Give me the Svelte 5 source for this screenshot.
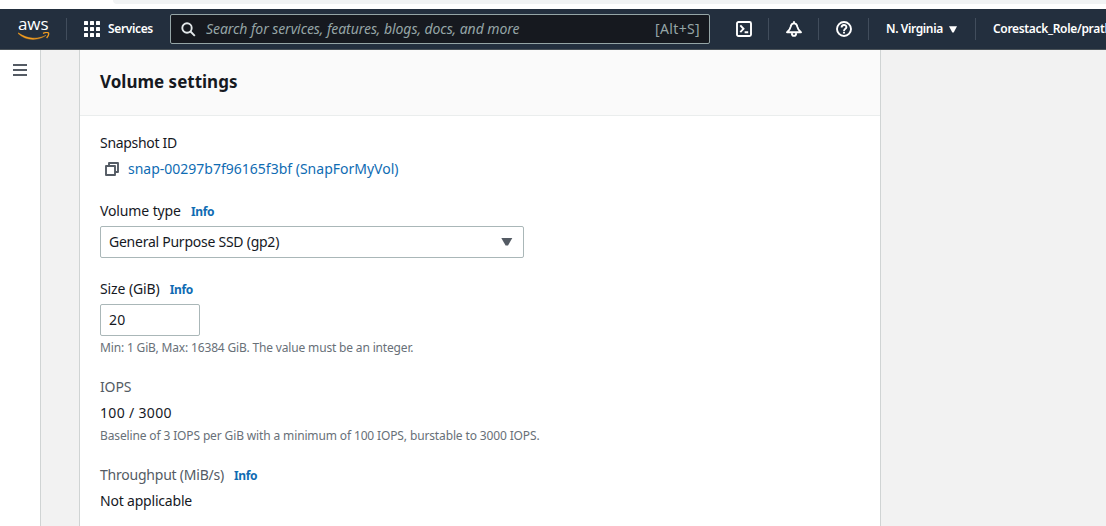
<script>
  let size = $state('20');
</script>

<div class="page">
  <div class="browser-strip"><div class="omnibox"></div></div>

  <header class="topbar">
    <a class="logo" aria-label="aws">
      <span class="logo-word">aws</span>
      <svg class="smile" width="32" height="10" viewBox="0 0 32 10">
        <path d="M0.3 0.8C9 7.2 20 7.6 28 3.3C20 9.2 7.5 8.8 0.1 1.5Z" fill="#f29c1f" stroke="#f29c1f" stroke-width="0.4" />
        <path d="M25 1.4C27.2 0.5 29.8 0.4 30.5 1C31 2.2 29.9 4.6 28.6 6" fill="none" stroke="#f29c1f" stroke-width="1.3" />
      </svg>
    </a>
    <i class="rule"></i>
    <div class="services">
      <svg width="16" height="16" viewBox="0 0 16 16" fill="#fff">
        {#each [0, 6, 12] as y}
          {#each [0, 6, 12] as x}
            <rect {x} {y} width="4" height="4" rx="0.5" />
          {/each}
        {/each}
      </svg>
      <span class="services-text">Services</span>
    </div>
    <div class="search">
      <svg width="15" height="15" viewBox="0 0 15 15" fill="none" stroke="#e3e8ea" stroke-width="1.9">
        <circle cx="6" cy="6" r="4.7" />
        <path d="M9.5 9.5L13.8 13.8" />
      </svg>
      <span class="placeholder">Search for services, features, blogs, docs, and more</span>
      <span class="shortcut">[Alt+S]</span>
    </div>
    <div class="tool shell">
      <svg width="16" height="16" viewBox="0 0 16 16" fill="none" stroke="#fff" stroke-width="1.9">
        <rect x="1" y="1" width="14" height="14" rx="1.5" />
        <path d="M4.3 4.4L7.5 7.8L4.3 11.2M8.6 11.2H12.2" />
      </svg>
    </div>
    <i class="rule"></i>
    <div class="tool">
      <svg width="16" height="16" viewBox="0 0 16 16" fill="none" stroke="#fff" stroke-width="1.9" stroke-linejoin="round">
        <path d="M8 0.3V2.4M1 11.2H15C12.6 9.7 11.9 8.3 11.4 5.9C11 3.6 9.8 2.4 8 2.4S5 3.6 4.6 5.9C4.1 8.3 3.4 9.7 1 11.2Z" />
        <path d="M5.8 12.1C5.9 15.8 10.1 15.8 10.2 12.1" />
      </svg>
    </div>
    <i class="rule"></i>
    <div class="tool">
      <svg width="16" height="16" viewBox="0 0 16 16" fill="none" stroke="#fff" stroke-width="1.9">
        <circle cx="8" cy="8" r="7" />
        <path d="M5.6 6.5C5.6 3.3 10.4 3.3 10.4 6.2C10.4 7.9 8 7.7 8 10" />
        <path d="M8 10.8V12.6" />
      </svg>
    </div>
    <i class="rule"></i>
    <div class="region">
      <span class="region-text">N. Virginia</span>
      <svg width="8" height="7" viewBox="0 0 8 7"><path d="M0 0.3H8L4.7 6.5H3.3Z" fill="#fff" /></svg>
    </div>
    <i class="rule"></i>
    <div class="account">Corestack_Role/prath</div>
  </header>

  <div class="body">
    <nav class="side">
      <svg width="14" height="12" viewBox="0 0 14 12" fill="#545b64">
        <rect width="14" height="2" /><rect y="5" width="14" height="2" /><rect y="10" width="14" height="2" />
      </svg>
    </nav>
    <main class="card">
      <div class="card-head"><h2>Volume settings</h2></div>
      <div class="form">
        <section>
          <div class="label"><span class="t-snap">Snapshot ID</span></div>
          <div class="row snapshot">
            <svg width="14" height="14" viewBox="0 0 14 14" fill="none" stroke="#545b64" stroke-width="1.9">
              <path d="M1 4H10V13H1ZM4 4V1H13V10H10" stroke-linejoin="round" />
            </svg>
            <a class="t-link">snap-00297b7f96165f3bf (SnapForMyVol)</a>
          </div>
        </section>
        <section>
          <div class="label"><span class="t-type">Volume type</span><a class="info">Info</a></div>
          <div class="field select">
            <span class="t-gp">General Purpose SSD (gp2)</span>
            <svg width="12" height="8" viewBox="0 0 12 8"><path d="M0.3 0H11.3L7 7.6H4.6Z" fill="#545b64" /></svg>
          </div>
        </section>
        <section>
          <div class="label"><span class="t-size">Size (GiB)</span><a class="info">Info</a></div>
          <input class="field number" bind:value={size} />
          <div class="hint t-min">Min: 1 GiB, Max: 16384 GiB. The value must be an integer.</div>
        </section>
        <section>
          <div class="label muted"><span class="t-iops">IOPS</span></div>
          <div class="row"><span class="t-val">100 / 3000</span></div>
          <div class="hint t-base">Baseline of 3 IOPS per GiB with a minimum of 100 IOPS, burstable to 3000 IOPS.</div>
        </section>
        <section>
          <div class="label muted"><span class="t-thr">Throughput (MiB/s)</span><a class="info">Info</a></div>
          <div class="row"><span class="t-na">Not applicable</span></div>
        </section>
      </div>
    </main>
  </div>
</div>

<style>
  :global(body) { margin: 0; overflow: hidden; }
  .page {
    width: 1106px; height: 526px; overflow: hidden; display: flex; flex-direction: column;
    background: #fff; color: #16191f; font: 14px/22px "Noto Sans", sans-serif; white-space: nowrap;
  }
  .page * { box-sizing: border-box; }
  .browser-strip { height: 9px; flex: none; padding-left: 113px; }
  .omnibox { height: 4px; background: #f1f3f4; border-bottom-left-radius: 4px; }
  .topbar {
    height: 41px; flex: none; display: flex; align-items: center; background: #232f3e; color: #fff;
    border-bottom: 1px solid #4b5359; font-size: 12px; font-weight: 600; overflow: hidden;
  }
  .topbar > * { flex: none; }
  .logo { width: 66px; height: 40px; padding: 6px 0 0 18px; display: flex; flex-direction: column; }
  .logo-word { font: 500 17px/18px "Open Sans", sans-serif; letter-spacing: -0.1px; }
  .smile { margin-top: -1px; }
  .rule { width: 1px; height: 22px; background: #414d5c; }
  .services { width: 103px; padding-left: 17px; display: flex; align-items: center; gap: 8px; }
  .services-text { letter-spacing: -0.36px; }
  .search {
    width: 540px; height: 30px; background: #16191f; border: 1px solid #95a5a6; border-radius: 2px;
    display: flex; align-items: center; padding: 0 9px 0 10px; gap: 10px; font-size: 14px; font-weight: 400; color: #95a5a6;
  }
  .placeholder { font-style: italic; flex: 1; letter-spacing: -0.065px; }
  .shortcut { letter-spacing: 0.35px; }
  .tool { width: 49px; display: flex; justify-content: center; }
  .shell { width: 58px; padding-left: 10px; }
  .region { width: 106px; padding-left: 17px; display: flex; align-items: center; gap: 6px; }
  .region-text { letter-spacing: -0.38px; }
  .account { padding: 0 0 0 17px; letter-spacing: -0.33px; }
  .body { flex: 1; display: flex; background: #f2f2f2; min-height: 0; }
  .side { width: 41px; background: #fff; border-right: 1px solid #d0d4d4; padding: 14px 0 0 13px; margin-right: 38px; }
  .side svg { display: block; }
  .card { width: 802px; background: #fff; border: 1px solid #d0d4d4; border-width: 0 1px; }
  .card-head { height: 66px; background: #fafafa; border-bottom: 1px solid #eaeded; padding: 21px 20px 0; }
  h2 { margin: 0; font-size: 17px; line-height: 22px; font-weight: 700; }
  .form { padding: 16px 20px; display: flex; flex-direction: column; gap: 20px; }
  section { display: flex; flex-direction: column; gap: 4px; align-items: flex-start; }
  .label { height: 22px; display: flex; align-items: center; }
  .muted { color: #545b64; }
  .row { height: 22px; display: flex; align-items: center; }
  .snapshot { padding-left: 5px; gap: 9px; }
  .t-snap { letter-spacing: -0.3px; }
  .t-type { letter-spacing: -0.12px; }
  .t-gp { letter-spacing: -0.25px; }
  .t-size { letter-spacing: -0.1px; }
  .t-min { letter-spacing: -0.165px; }
  .t-iops { letter-spacing: -0.15px; }
  .t-val { letter-spacing: 0.33px; }
  .t-base { letter-spacing: -0.135px; }
  .t-thr { letter-spacing: -0.22px; }
  .t-na { letter-spacing: -0.2px; }
  a { color: #0f6cb3; }
  .logo { color: #fff; }
  .info { font-size: 12px; font-weight: 700; margin-left: 10px; letter-spacing: -0.35px; padding-top: 2px; }
  .field { height: 32px; border: 1px solid #aab7b8; border-radius: 2px; background: #fff; padding: 0 8px; }
  .select { width: 424px; display: flex; align-items: center; justify-content: space-between; padding-right: 10px; }
  .number { width: 100px; font: inherit; color: inherit; margin: 0; padding-bottom: 1px; letter-spacing: 0.3px; }
  .hint { font-size: 12px; line-height: 16px; color: #687078; }
</style>
